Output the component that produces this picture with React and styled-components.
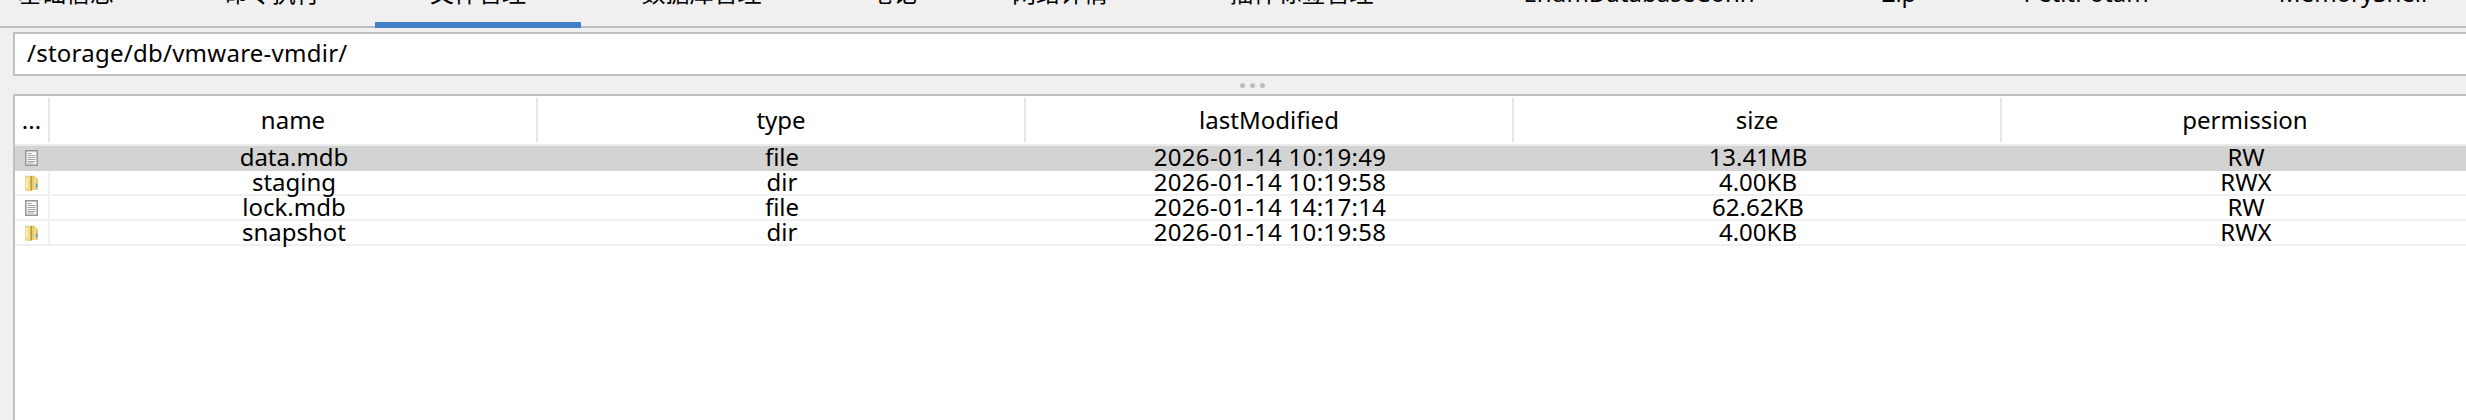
import React from "react";
import styled, { createGlobalStyle } from "styled-components";

const Global = createGlobalStyle`
  html, body { margin: 0; padding: 0; background: #f0f0f0; overflow: hidden; }
  #root { width: 2466px; height: 420px; overflow: hidden; }
`;

const UI_FONT = `"Noto Sans", "Noto Sans CJK SC", sans-serif`;

const Page = styled.div`
  width: 2466px;
  height: 420px;
  background: #f0f0f0;
  font-family: ${UI_FONT};
  color: #000;
  overflow: hidden;
`;

const TabBar = styled.div`
  display: flex;
  width: 2540px;
  height: 28px;
  border-bottom: 2px solid #bdbdbd;
  box-sizing: border-box;
  margin-left: -37px;
  align-items: flex-end;
`;

const Tab = styled.div`
  flex: none;
  width: ${(p) => p.$w}px;
  box-sizing: border-box;
  height: 28px;
  margin-bottom: -2px;
  font-size: 24px;
  display: flex;
  justify-content: center;
  align-items: flex-end;
  white-space: nowrap;
  border-bottom: 6px solid ${(p) => (p.$active ? "#4080c8" : "transparent")};
  & > span { display: block; margin-bottom: 12px; line-height: 34px; }
`;

const Content = styled.div`
  width: 2478px;
  margin-left: 13px;
`;

const PathBox = styled.div`
  margin-top: 4px;
  height: 44px;
  box-sizing: border-box;
  border: 2px solid #c0c0c0;
  background: #fff;
  font-size: 24px;
  letter-spacing: 0.25px;
  line-height: 38px;
  padding-left: 12px;
`;

const Grip = styled.div`
  height: 18px;
  display: flex;
  align-items: center;
  justify-content: center;
  gap: 5px;
`;

const Dot = styled.span`
  width: 5px;
  height: 5px;
  border-radius: 50%;
  background: #bdbdbd;
`;

const TablePanel = styled.div`
  height: 326px;
  box-sizing: border-box;
  border: 2px solid #c0c0c0;
  border-bottom: none;
  background: #fff;
  overflow: hidden;
`;

const HeadRow = styled.div`
  display: grid;
  grid-template-columns: 35px repeat(5, 488px);
  height: 50px;
  padding-top: 2px;
  box-sizing: border-box;
  border-bottom: 2px solid #ececec;
`;

const HeadCell = styled.div`
  box-sizing: border-box;
  border-right: 2px solid #e6e6e6;
  font-size: 24px;
  line-height: 44px;
  text-align: center;
  height: 44px;
`;

const Row = styled.div`
  display: grid;
  grid-template-columns: 35px repeat(5, 488px);
  height: 25px;
  box-sizing: border-box;
  background: ${(p) => (p.$selected ? "#d3d3d3" : "#fff")};
  border-bottom: ${(p) => (p.$selected ? "0" : "2px solid #f0f0f0")};
`;

const Cell = styled.div`
  box-sizing: border-box;
  font-size: 24px;
  letter-spacing: ${(p) => (p.$numeric ? "0.3px" : "0")};
  line-height: 22px;
  text-align: center;
  height: 25px;
  white-space: nowrap;
`;

const IconCell = styled.div`
  box-sizing: border-box;
  height: 25px;
  padding: 4px 0 0 10px;
  border-right: ${(p) => (p.$selected ? "0" : "2px solid #f0f0f0")};
  line-height: 0;
`;

function FileIcon() {
  return (
    <svg width="13" height="16" viewBox="0 0 13 16">
      <rect x="0.75" y="0.75" width="11.5" height="14.5" fill="#f8f8f8" stroke="#969696" strokeWidth="1.5" />
      <path d="M2.5 3.5h4M2.5 5.5h8M2.5 7.5h8M2.5 9.5h8M2.5 11.5h8M2.5 13h6" stroke="#a4a4a4" strokeWidth="1" />
    </svg>
  );
}

function FolderIcon() {
  return (
    <svg width="13" height="16" viewBox="0 0 13 16">
      <path d="M0.3 1 H6 V15.7 H1.2 L0.3 14.5 Z" fill="#f2dc85" stroke="#dcc06a" strokeWidth="0.5" />
      <path d="M6 1 H9 L12.7 4.5 V14.5 H6 Z" fill="#e8cc6e" stroke="#d4b55c" strokeWidth="0.5" />
      <path d="M6.3 1 V15.5" stroke="#bb9a3e" strokeWidth="1.4" />
      <path d="M2 3 V13" stroke="#f8eebc" strokeWidth="2" />
      <path d="M9.8 3 V14.5" stroke="#f3e3a0" strokeWidth="1.4" />
      <rect x="10.8" y="8.6" width="1.6" height="4" fill="#3ea6dc" />
    </svg>
  );
}

const tabs = [
  { label: "基础信息", width: 206 },
  { label: "命令执行", width: 206 },
  { label: "文件管理", width: 206, active: true },
  { label: "数据库管理", width: 241 },
  { label: "笔记", width: 142 },
  { label: "网络详情", width: 192 },
  { label: "插件标签管理", width: 291 },
  { label: "EnumDatabaseConn", width: 384 },
  { label: "Zip", width: 136 },
  { label: "PetitPotam", width: 238 },
  { label: "MemoryShell", width: 296 },
];
const columns = ["name", "type", "lastModified", "size", "permission"];
const rows = [
  { kind: "file", name: "data.mdb", type: "file", time: "2026-01-14 10:19:49", size: "13.41MB", perm: "RW", selected: true },
  { kind: "dir", name: "staging", type: "dir", time: "2026-01-14 10:19:58", size: "4.00KB", perm: "RWX" },
  { kind: "file", name: "lock.mdb", type: "file", time: "2026-01-14 14:17:14", size: "62.62KB", perm: "RW" },
  { kind: "dir", name: "snapshot", type: "dir", time: "2026-01-14 10:19:58", size: "4.00KB", perm: "RWX" },
];

export default function App() {
  return (
    <Page>
      <Global />
      <TabBar>
        {tabs.map((t) => (
          <Tab key={t.label} $w={t.width} $active={t.active}><span>{t.label}</span></Tab>
        ))}
      </TabBar>
      <Content>
        <PathBox>/storage/db/vmware-vmdir/</PathBox>
        <Grip><Dot /><Dot /><Dot /></Grip>
        <TablePanel>
          <HeadRow>
            <HeadCell>...</HeadCell>
            {columns.map((c) => <HeadCell key={c}>{c}</HeadCell>)}
          </HeadRow>
          {rows.map((r) => (
            <Row key={r.name} $selected={r.selected}>
              <IconCell $selected={r.selected}>
                {r.kind === "file" ? <FileIcon /> : <FolderIcon />}
              </IconCell>
              <Cell>{r.name}</Cell>
              <Cell>{r.type}</Cell>
              <Cell $numeric>{r.time}</Cell>
              <Cell>{r.size}</Cell>
              <Cell>{r.perm}</Cell>
            </Row>
          ))}
        </TablePanel>
      </Content>
    </Page>
  );
}
